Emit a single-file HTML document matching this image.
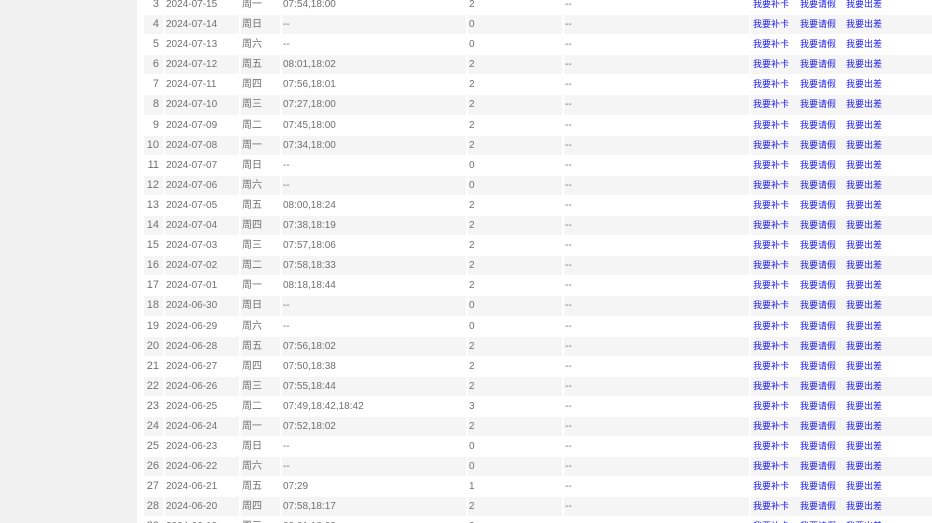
<!DOCTYPE html>
<html><head><meta charset="utf-8"><style>
html,body{margin:0;width:932px;height:523px;overflow:hidden}
body{background:#fff;font-family:"Liberation Sans","Noto Sans CJK SC",sans-serif;font-size:10px;color:#707070;position:relative}
.side{position:absolute;left:0;top:0;width:137px;height:523px;background:#f1f1f1}
.tb{position:absolute;left:144px;top:-5px;width:788px}
.r{height:20.1px;box-sizing:border-box;border-bottom:1px solid #fff;position:relative;line-height:19px;white-space:nowrap}
.r.g{background:#f5f5f5}
.r span{position:absolute;top:0}
.c0{left:0;width:15px;text-align:right;font-size:11px}
.c1{left:22px}.c2{left:98px}.c3{left:139px}.c4{left:325px}.c5{left:421px}
.l{color:#1a1af0;font-size:9px}
.a1{left:609px}.a2{left:656px}.a3{left:702px}
.v{position:absolute;top:0;bottom:0;width:2px;background:#fff}
</style></head><body>
<div class="side"></div>
<div class="tb" id="t"></div>
<script>
var d=[[3,"07-15","周一","07:54,18:00",2],[4,"07-14","周日","--",0],[5,"07-13","周六","--",0],[6,"07-12","周五","08:01,18:02",2],[7,"07-11","周四","07:56,18:01",2],[8,"07-10","周三","07:27,18:00",2],[9,"07-09","周二","07:45,18:00",2],[10,"07-08","周一","07:34,18:00",2],[11,"07-07","周日","--",0],[12,"07-06","周六","--",0],[13,"07-05","周五","08:00,18:24",2],[14,"07-04","周四","07:38,18:19",2],[15,"07-03","周三","07:57,18:06",2],[16,"07-02","周二","07:58,18:33",2],[17,"07-01","周一","08:18,18:44",2],[18,"06-30","周日","--",0],[19,"06-29","周六","--",0],[20,"06-28","周五","07:56,18:02",2],[21,"06-27","周四","07:50,18:38",2],[22,"06-26","周三","07:55,18:44",2],[23,"06-25","周二","07:49,18:42,18:42",3],[24,"06-24","周一","07:52,18:02",2],[25,"06-23","周日","--",0],[26,"06-22","周六","--",0],[27,"06-21","周五","07:29",1],[28,"06-20","周四","07:58,18:17",2],[29,"06-19","周三","08:01,18:02",2]];
var h="";
d.forEach(function(x){h+='<div class="r'+(x[0]%2==0?' g':'')+'"><span class="c0">'+x[0]+'</span><span class="c1">2024-'+x[1]+'</span><span class="c2">'+x[2]+'</span><span class="c3">'+x[3]+'</span><span class="c4">'+x[4]+'</span><span class="c5">--</span><span class="l a1">我要补卡</span><span class="l a2">我要请假</span><span class="l a3">我要出差</span><i class="v" style="left:19px"></i><i class="v" style="left:95px"></i><i class="v" style="left:136px"></i><i class="v" style="left:322px"></i><i class="v" style="left:418px"></i><i class="v" style="left:605px"></i></div>'});
document.getElementById("t").innerHTML=h;
</script>
</body></html>
